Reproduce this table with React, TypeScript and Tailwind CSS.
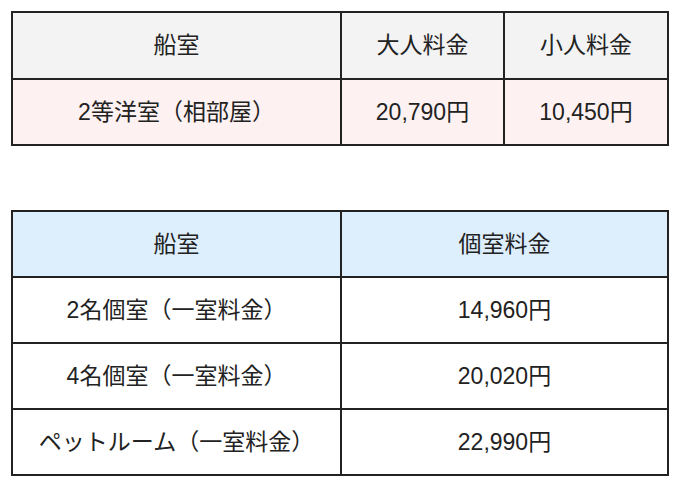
import React from 'react';

const cell = 'border-2 border-[#222] text-center align-middle font-normal';

export default function App() {
  return (
    <div
      className="bg-white w-[680px] h-[489px] pl-[11px] pt-[11px] text-[23px] text-[#222]"
      style={{ fontFamily: '"Liberation Sans", "Noto Sans CJK JP", sans-serif' }}
    >
      <table className="border-collapse w-[656px] table-fixed">
        <colgroup>
          <col className="w-[329px]" />
          <col className="w-[163px]" />
          <col className="w-[164px]" />
        </colgroup>
        <thead>
          <tr className="h-[67px] bg-[#f3f3f3]">
            <th className={cell}>船室</th>
            <th className={cell}>大人料金</th>
            <th className={cell}>小人料金</th>
          </tr>
        </thead>
        <tbody>
          <tr className="h-[66px] bg-[#fdf1f1]">
            <td className={cell}>2等洋室（相部屋）</td>
            <td className={cell}>20,790円</td>
            <td className={cell}>10,450円</td>
          </tr>
        </tbody>
      </table>

      <table className="border-collapse w-[656px] table-fixed mt-[64px]">
        <colgroup>
          <col className="w-[329px]" />
          <col className="w-[327px]" />
        </colgroup>
        <thead>
          <tr className="h-[66px] bg-[#ddeefc]">
            <th className={cell}>船室</th>
            <th className={cell}>個室料金</th>
          </tr>
        </thead>
        <tbody>
          {[
            ['2名個室（一室料金）', '14,960円'],
            ['4名個室（一室料金）', '20,020円'],
            ['ペットルーム（一室料金）', '22,990円'],
          ].map(([room, price]) => (
            <tr key={room} className="h-[66px] bg-white">
              <td className={cell}>{room}</td>
              <td className={cell}>{price}</td>
            </tr>
          ))}
        </tbody>
      </table>
    </div>
  );
}
